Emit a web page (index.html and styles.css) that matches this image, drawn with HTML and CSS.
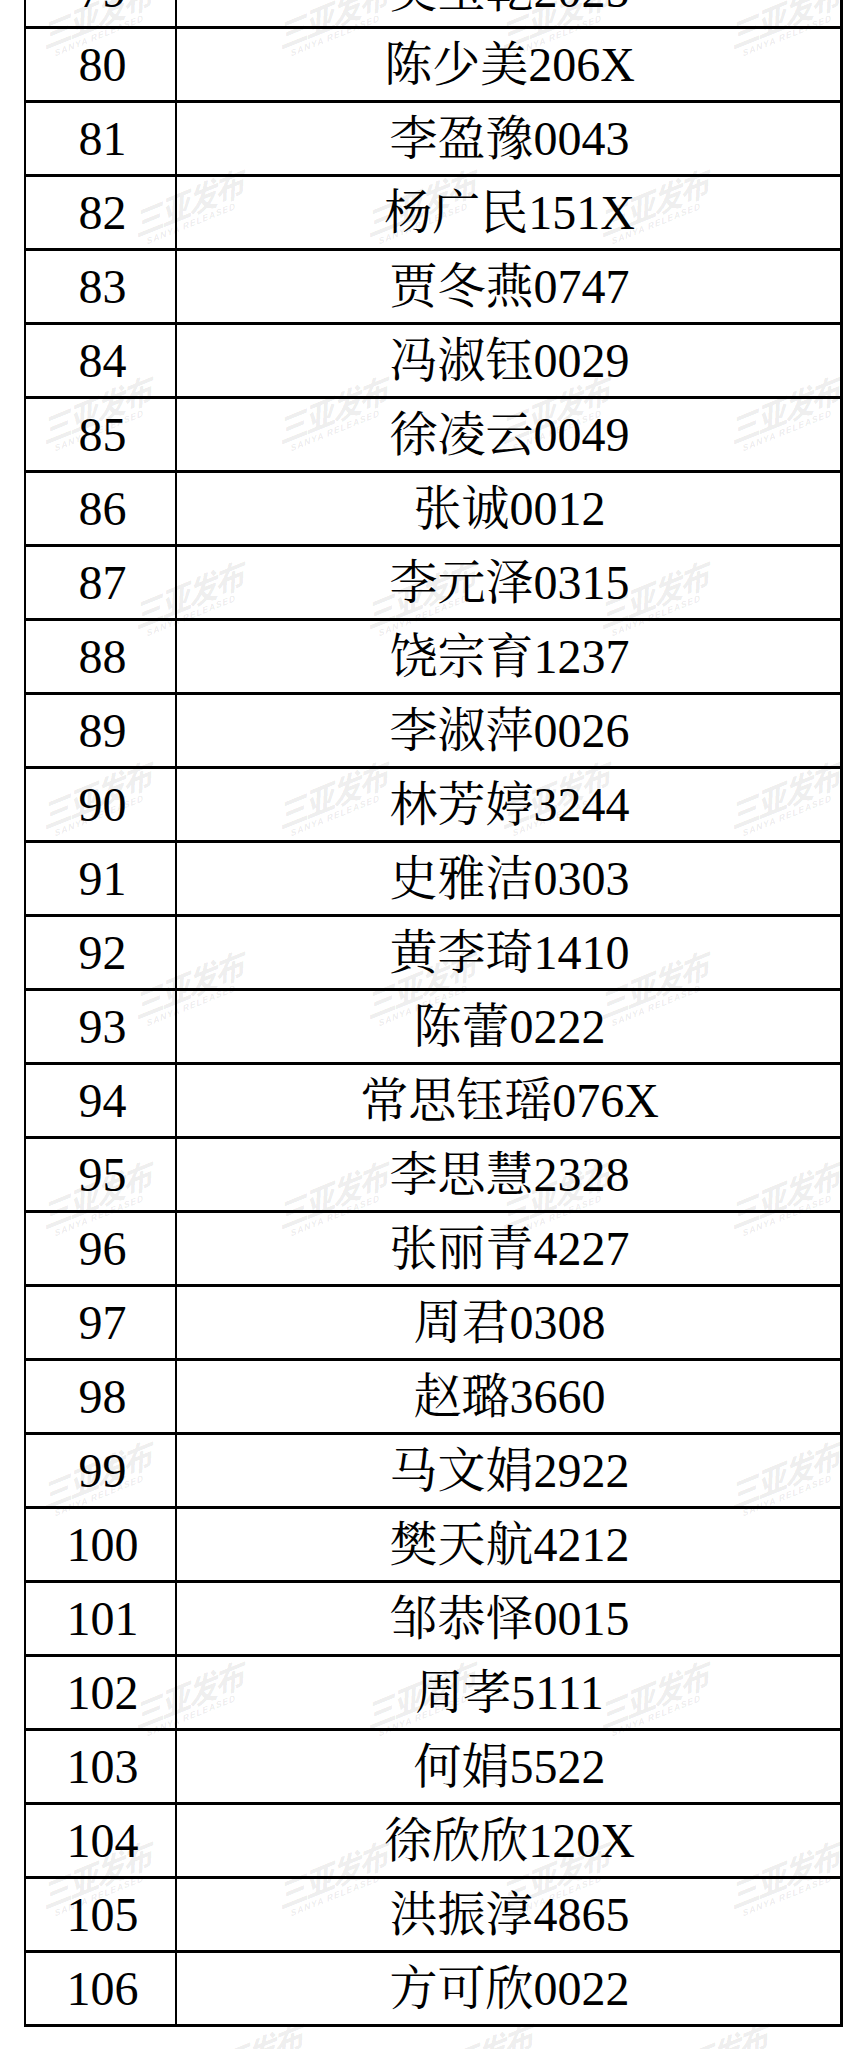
FILE: index.html
```html
<!DOCTYPE html>
<html lang="zh-CN">
<head>
<meta charset="utf-8">
<title>名单</title>
<link rel="stylesheet" href="styles.css">
</head>
<body>
<div class="page">
  <table class="list">
    <tbody>
      <tr><td class="num">79</td><td class="name">吴玉乾2025</td></tr>
      <tr><td class="num">80</td><td class="name">陈少美206X</td></tr>
      <tr><td class="num">81</td><td class="name">李盈豫0043</td></tr>
      <tr><td class="num">82</td><td class="name">杨广民151X</td></tr>
      <tr><td class="num">83</td><td class="name">贾冬燕0747</td></tr>
      <tr><td class="num">84</td><td class="name">冯淑钰0029</td></tr>
      <tr><td class="num">85</td><td class="name">徐凌云0049</td></tr>
      <tr><td class="num">86</td><td class="name">张诚0012</td></tr>
      <tr><td class="num">87</td><td class="name">李元泽0315</td></tr>
      <tr><td class="num">88</td><td class="name">饶宗育1237</td></tr>
      <tr><td class="num">89</td><td class="name">李淑萍0026</td></tr>
      <tr><td class="num">90</td><td class="name">林芳婷3244</td></tr>
      <tr><td class="num">91</td><td class="name">史雅洁0303</td></tr>
      <tr><td class="num">92</td><td class="name">黄李琦1410</td></tr>
      <tr><td class="num">93</td><td class="name">陈蕾0222</td></tr>
      <tr><td class="num">94</td><td class="name">常思钰瑶076X</td></tr>
      <tr><td class="num">95</td><td class="name">李思慧2328</td></tr>
      <tr><td class="num">96</td><td class="name">张丽青4227</td></tr>
      <tr><td class="num">97</td><td class="name">周君0308</td></tr>
      <tr><td class="num">98</td><td class="name">赵璐3660</td></tr>
      <tr><td class="num">99</td><td class="name">马文娟2922</td></tr>
      <tr><td class="num">100</td><td class="name">樊天航4212</td></tr>
      <tr><td class="num">101</td><td class="name">邹恭怿0015</td></tr>
      <tr><td class="num">102</td><td class="name">周孝5111</td></tr>
      <tr><td class="num">103</td><td class="name">何娟5522</td></tr>
      <tr><td class="num">104</td><td class="name">徐欣欣120X</td></tr>
      <tr><td class="num">105</td><td class="name">洪振淳4865</td></tr>
      <tr><td class="num">106</td><td class="name">方可欣0022</td></tr>
    </tbody>
  </table>

  <div class="wm-layer" aria-hidden="true">
    <span class="wm" style="left:39px;top:20px">三亚发布<small>SANYA RELEASED</small></span>
    <span class="wm" style="left:275px;top:20px">三亚发布<small>SANYA RELEASED</small></span>
    <span class="wm" style="left:497px;top:20px">三亚发布<small>SANYA RELEASED</small></span>
    <span class="wm" style="left:727px;top:20px">三亚发布<small>SANYA RELEASED</small></span>

    <span class="wm" style="left:131px;top:208px">三亚发布<small>SANYA RELEASED</small></span>
    <span class="wm" style="left:363px;top:208px">三亚发布<small>SANYA RELEASED</small></span>
    <span class="wm" style="left:596px;top:208px">三亚发布<small>SANYA RELEASED</small></span>

    <span class="wm" style="left:39px;top:415px">三亚发布<small>SANYA RELEASED</small></span>
    <span class="wm" style="left:275px;top:415px">三亚发布<small>SANYA RELEASED</small></span>
    <span class="wm" style="left:497px;top:415px">三亚发布<small>SANYA RELEASED</small></span>
    <span class="wm" style="left:727px;top:415px">三亚发布<small>SANYA RELEASED</small></span>

    <span class="wm" style="left:131px;top:600px">三亚发布<small>SANYA RELEASED</small></span>
    <span class="wm" style="left:363px;top:600px">三亚发布<small>SANYA RELEASED</small></span>
    <span class="wm" style="left:596px;top:600px">三亚发布<small>SANYA RELEASED</small></span>

    <span class="wm" style="left:39px;top:800px">三亚发布<small>SANYA RELEASED</small></span>
    <span class="wm" style="left:275px;top:800px">三亚发布<small>SANYA RELEASED</small></span>
    <span class="wm" style="left:497px;top:800px">三亚发布<small>SANYA RELEASED</small></span>
    <span class="wm" style="left:727px;top:800px">三亚发布<small>SANYA RELEASED</small></span>

    <span class="wm" style="left:131px;top:990px">三亚发布<small>SANYA RELEASED</small></span>
    <span class="wm" style="left:363px;top:990px">三亚发布<small>SANYA RELEASED</small></span>
    <span class="wm" style="left:596px;top:990px">三亚发布<small>SANYA RELEASED</small></span>

    <span class="wm" style="left:39px;top:1200px">三亚发布<small>SANYA RELEASED</small></span>
    <span class="wm" style="left:275px;top:1200px">三亚发布<small>SANYA RELEASED</small></span>
    <span class="wm" style="left:497px;top:1200px">三亚发布<small>SANYA RELEASED</small></span>
    <span class="wm" style="left:727px;top:1200px">三亚发布<small>SANYA RELEASED</small></span>

    <span class="wm" style="left:39px;top:1480px">三亚发布<small>SANYA RELEASED</small></span>
    <span class="wm" style="left:727px;top:1480px">三亚发布<small>SANYA RELEASED</small></span>

    <span class="wm" style="left:131px;top:1700px">三亚发布<small>SANYA RELEASED</small></span>
    <span class="wm" style="left:363px;top:1700px">三亚发布<small>SANYA RELEASED</small></span>
    <span class="wm" style="left:596px;top:1700px">三亚发布<small>SANYA RELEASED</small></span>

    <span class="wm" style="left:39px;top:1880px">三亚发布<small>SANYA RELEASED</small></span>
    <span class="wm" style="left:275px;top:1880px">三亚发布<small>SANYA RELEASED</small></span>
    <span class="wm" style="left:497px;top:1880px">三亚发布<small>SANYA RELEASED</small></span>
    <span class="wm" style="left:727px;top:1880px">三亚发布<small>SANYA RELEASED</small></span>

    <span class="wm" style="left:190px;top:2062px">三亚发布<small>SANYA RELEASED</small></span>
    <span class="wm" style="left:420px;top:2062px">三亚发布<small>SANYA RELEASED</small></span>
    <span class="wm" style="left:655px;top:2062px">三亚发布<small>SANYA RELEASED</small></span>
  </div>
</div>
</body>
</html>
```

FILE: styles.css
```css
html, body {
  margin: 0;
  padding: 0;
  background: #ffffff;
}

.page {
  position: relative;
  width: 866px;
  height: 2049px;
  overflow: hidden;
}

.list {
  border-collapse: separate;
  border-spacing: 0;
  table-layout: fixed;
  width: 819px;
  margin: -48px 0 0 24px;
  border-left: 2px solid #000;
  border-right: 3px solid #000;
  border-bottom: 3px solid #000;
  font-family: "Liberation Serif", "Noto Serif CJK SC", "Noto Sans CJK SC", serif;
  font-size: 48px;
  line-height: 1;
  color: #000;
}

.list td {
  border-top: 3px solid #000;
  height: 71px;
  padding: 0;
  text-align: center;
  vertical-align: middle;
  white-space: nowrap;
}

.list td.num {
  width: 151px;
  box-sizing: border-box;
  padding-left: 4px;
  border-right: 2px solid #000;
}

.list td.name {
  padding-left: 2px;
}

.wm-layer {
  position: absolute;
  inset: 0;
  pointer-events: none;
}

.wm {
  position: absolute;
  display: flex;
  flex-direction: column;
  align-items: center;
  font-family: "Noto Sans CJK SC", sans-serif;
  font-weight: 700;
  font-style: italic;
  font-size: 31px;
  line-height: 1;
  letter-spacing: -2px;
  color: rgba(0, 0, 0, 0.085);
  transform: rotate(-22deg) skewX(-12deg);
  transform-origin: left top;
  white-space: nowrap;
}

.wm small {
  font-family: "Liberation Sans", sans-serif;
  font-size: 9px;
  font-weight: 700;
  letter-spacing: 1px;
  margin-top: 2px;
}
```
